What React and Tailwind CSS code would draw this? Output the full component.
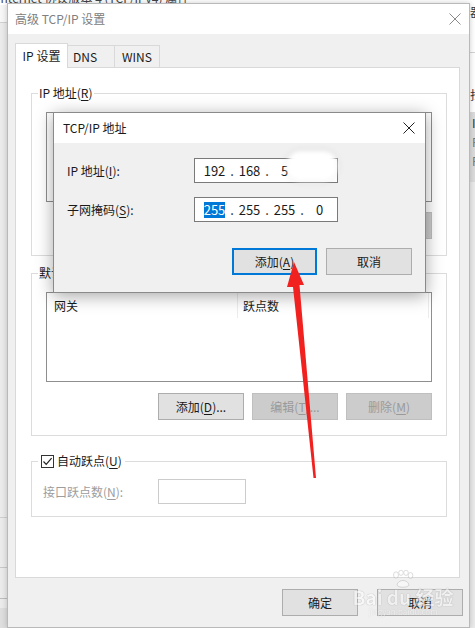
import React from "react";

const font = "font-['Noto_Sans_CJK_SC',sans-serif]";

const Acc = ({ children }) => (
  <span className="underline underline-offset-[2px] decoration-[1px]">{children}</span>
);

function CloseIcon({ color }) {
  return (
    <svg width="12" height="12" viewBox="0 0 12 12" className="block">
      <path d="M0.5 0.5L11.5 11.5M11.5 0.5L0.5 11.5" stroke={color} strokeWidth="1" fill="none" />
    </svg>
  );
}

function Btn({ children, disabled, primary, w = "w-[86px]" }) {
  let look = "bg-[#e1e1e1] border border-[#adadad] text-[#1a1a1a]";
  if (disabled) look = "bg-[#cccccc] border border-[#bfbfbf] text-[#9a9a9a]";
  if (primary) look = "bg-[#e1e1e1] border-2 border-[#0078d7] text-[#1a1a1a]";
  return (
    <div className={`${w} h-[27px] shrink-0 flex items-center justify-center text-[12px] ${look}`}>
      {children}
    </div>
  );
}

function ListBox({ header }) {
  return (
    <div className="h-[90px] w-full bg-white border border-[#8f8f8f]">
      {header && (
        <div className="flex h-[25px] text-[12px] text-[#1a1a1a]">
          <div className="w-[191px] pl-[7px] flex items-center border-r border-[#ececec]">网关</div>
          <div className="flex-1 pl-[5px] flex items-center border-r border-[#ececec] mr-[2px]">跃点数</div>
        </div>
      )}
    </div>
  );
}

function Octets({ parts, selectFirst }) {
  return (
    <div className="flex items-center h-full pl-[6px] text-[13px] text-[#1a1a1a]">
      {parts.map((p, i) => (
        <React.Fragment key={i}>
          <span className="w-[27px] flex justify-center">
            <span className={i === 0 && selectFirst ? "bg-[#0078d7] text-white leading-[16px]" : "leading-[16px]"}>
              {p}
            </span>
          </span>
          {i < 3 && <span className="w-[8px] text-center leading-[16px]">.</span>}
        </React.Fragment>
      ))}
    </div>
  );
}

// the properties window sitting behind the dialog
function BackWindow() {
  return (
    <div className="absolute inset-0 bg-[#ebebeb]">
      <div className="h-[5px] bg-white overflow-hidden relative">
        <span className="absolute left-[-3px] top-[-9px] text-[12px] leading-[14px] text-[#444] whitespace-nowrap">
          Internet 协议版本 4 (TCP/IPv4) 属性
        </span>
      </div>
      <div className="absolute left-0 top-[5px] w-[7px] h-[18px] bg-[#f7f7f7]" />
      <div className="absolute left-0 top-[22px] w-[7px] h-px bg-[#d0d0d0]" />
      <div className="absolute left-0 top-[517px] w-[7px] h-px bg-[#cfcfcf]" />
      <div className="absolute left-0 top-[567px] w-[7px] h-px bg-[#c8c8c8]" />
      <div className="absolute left-0 top-[598px] w-[7px] h-px bg-[#bdbdbd]" />
      <div className="absolute left-0 top-[608px] w-[7px] h-[20px] bg-[#dedede]" />
      <div className="absolute left-[470px] top-[0px] w-[5px] h-[112px] bg-white" />
      <div className="absolute left-[470px] top-[52px] w-[5px] h-px bg-[#d5d5d5]" />
      <div className="absolute left-[470px] top-[112px] w-[5px] h-[70px] bg-[#dcdcdc]" />
      <div className="absolute left-[470px] top-[4px] w-[5px] h-[180px] overflow-hidden text-[12px] leading-[16px]">
        <div className="text-[#333]">器</div>
        <div className="h-[67px]" />
        <div className="text-[#333]">扫</div>
        <div className="h-[12px]" />
        <div className="pl-[2px] text-[#333]">I</div>
        <div className="pl-[2px] mt-[3px] text-[#777]">P</div>
        <div className="pl-[2px] mt-[3px] text-[#777]">F</div>
      </div>
    </div>
  );
}

export default function App() {
  return (
    <div className={`relative w-[475px] h-[628px] overflow-hidden ${font}`}>
      <BackWindow />

      {/* 高级 TCP/IP 设置 */}
      <div className="absolute left-[7px] top-[3px] w-[463px] h-[625px] flex flex-col border border-[#b9b9b9] bg-[#f0f0f0] shadow-[0_0_6px_rgba(0,0,0,0.2)]">
        <div className="h-[30px] shrink-0 bg-white flex items-center justify-between pl-[7px] pr-[8px]">
          <span className="text-[12px] text-[#808080]">高级 TCP/IP 设置</span>
          <CloseIcon color="#8a8a8a" />
        </div>

        <div className="flex flex-col pl-[7px] pr-[9px] pt-[9px]">
          {/* tabs */}
          <div className="flex items-end text-[12px] text-[#1a1a1a]">
            <div className="relative z-10 -mb-px w-[53px] h-[25px] bg-white border border-b-0 border-[#d9d9d9] flex items-center justify-center pb-[1px]">
              IP 设置
            </div>
            <div className="w-[47px] h-[22px] border border-l-0 border-b-0 border-[#d9d9d9] flex items-center pl-[5px]">
              DNS
            </div>
            <div className="w-[45px] h-[22px] border border-l-0 border-b-0 border-[#d9d9d9] flex items-center justify-center">
              WINS
            </div>
          </div>

          {/* tab page */}
          <div className="h-[511px] bg-white border border-[#d9d9d9] pt-[17px] pl-[15px] pr-[12px] text-[12px] text-[#1a1a1a]">
            <fieldset className="h-[171px] border border-[#dcdcdc]">
              <legend className="ml-[6px] px-[1px] leading-[16px]">
                IP 地址(<Acc>R</Acc>)
              </legend>
              <div className="px-[14px] pt-[11px]">
                <ListBox />
                <div className="flex justify-end gap-[8px] mt-[10px]">
                  <Btn>添加(<Acc>A</Acc>)...</Btn>
                  <Btn disabled>编辑(<Acc>E</Acc>)...</Btn>
                  <Btn disabled>删除(<Acc>V</Acc>)</Btn>
                </div>
              </div>
            </fieldset>

            <fieldset className="h-[171px] mt-[9px] border border-[#dcdcdc]">
              <legend className="ml-[6px] px-[1px] leading-[16px]">
                默认网关(<Acc>F</Acc>):
              </legend>
              <div className="px-[14px] pt-[11px]">
                <ListBox header />
                <div className="flex justify-end gap-[8px] mt-[11px]">
                  <Btn>添加(<Acc>D</Acc>)...</Btn>
                  <Btn disabled>编辑(<Acc>T</Acc>)...</Btn>
                  <Btn disabled>删除(<Acc>M</Acc>)</Btn>
                </div>
              </div>
            </fieldset>

            <fieldset className="h-[64px] mt-[17px] border border-[#dcdcdc]">
              <legend className="ml-[6px] px-[3px] leading-[16px]">
                <span className="flex items-center gap-[3px]">
                  <span className="w-[13px] h-[13px] border border-[#333] bg-white flex items-center justify-center">
                    <svg width="11" height="11" viewBox="0 0 11 11">
                      <path d="M1.5 5.5L4.2 8.3L9.6 2.2" stroke="#222" strokeWidth="1.2" fill="none" />
                    </svg>
                  </span>
                  <span>
                    自动跃点(<Acc>U</Acc>)
                  </span>
                </span>
              </legend>
              <div className="flex items-center pl-[11px] pt-[10px] text-[#9d9d9d]">
                <span className="w-[115px]">
                  接口跃点数(<Acc>N</Acc>):
                </span>
                <div className="w-[88px] h-[25px] bg-white border border-[#cccccc]" />
              </div>
            </fieldset>
          </div>

          {/* 确定 / 取消 */}
          <div className="flex justify-end gap-[19px] mt-[11px] mr-[-3px]">
            <Btn w="w-[76px]">确定</Btn>
            <Btn>取消</Btn>
          </div>
        </div>
      </div>

      {/* TCP/IP 地址 */}
      <div className="absolute left-[53px] top-[112px] w-[373px] h-[181px] flex flex-col border border-[#8a8a8a] bg-[#f0f0f0] shadow-[0_3px_16px_rgba(0,0,0,0.35)] text-[12px] text-[#1a1a1a]">
        <div className="h-[30px] shrink-0 bg-white flex items-center justify-between pl-[9px] pr-[10px]">
          <span>TCP/IP 地址</span>
          <CloseIcon color="#222" />
        </div>
        <div className="flex flex-col pl-[13px] pr-[13px] pt-[15px]">
          <div className="flex items-center">
            <span className="w-[127px]">
              IP 地址(<Acc>I</Acc>):
            </span>
            <div className="w-[144px] h-[25px] bg-white border border-[#7a7a7a]">
              <Octets parts={["192", "168", "5", ""]} />
            </div>
          </div>
          <div className="flex items-center mt-[14px]">
            <span className="w-[127px]">
              子网掩码(<Acc>S</Acc>):
            </span>
            <div className="w-[144px] h-[25px] bg-white border border-[#7a7a7a]">
              <Octets parts={["255", "255", "255", "0"]} selectFirst />
            </div>
          </div>
          <div className="flex justify-end gap-[9px] mt-[26px]">
            <Btn primary w="w-[85px]">
              添加(<Acc>A</Acc>)
            </Btn>
            <Btn>取消</Btn>
          </div>
        </div>
      </div>

      {/* smudged last octet */}
      <div className="absolute left-[287px] top-[151px] w-[50px] h-[30px] rounded-[14px] bg-white blur-[2px] shadow-[0_0_6px_rgba(0,0,0,0.12)]" />
      <div className="absolute left-[295px] top-[159px] w-[12px] h-[15px] bg-white" />

      {/* red arrow */}
      <svg className="absolute left-0 top-0 pointer-events-none" width="475" height="628" viewBox="0 0 475 628">
        <polygon
          points="294,262 304,285 299.5,285 316,478 313.5,478 293,287 287,287"
          fill="#f0211f"
        />
      </svg>

      {/* watermark */}
      <div className="absolute left-[358px] top-[570px] w-[90px] pointer-events-none opacity-50 flex flex-col items-center">
        <svg width="26" height="18" viewBox="0 0 26 18">
          <g fill="#ffffff" stroke="#a8a8a8" strokeWidth="0.8">
            <ellipse cx="6" cy="5" rx="2.5" ry="3.2" />
            <ellipse cx="11" cy="2.8" rx="2.3" ry="2.6" />
            <ellipse cx="16" cy="2.8" rx="2.3" ry="2.6" />
            <ellipse cx="20.5" cy="5.5" rx="2.3" ry="3" />
            <path d="M7 15 C8 9 18 9 19 15 C18 18 8 18 7 15 Z" />
          </g>
        </svg>
        <div className="text-[19px] font-bold leading-[18px] text-white [text-shadow:0_0_1px_#8a8a8a,0_0_1px_#8a8a8a] whitespace-nowrap">
          Bai du 经验
        </div>
        <div className="text-[8px] leading-[11px] text-white [text-shadow:0_0_1px_#999] whitespace-nowrap">
          jingyan.baidu.com
        </div>
      </div>
    </div>
  );
}
